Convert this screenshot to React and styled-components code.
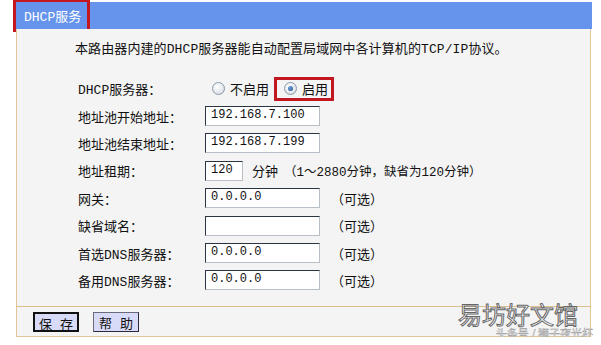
import React from "react";
import styled, { createGlobalStyle } from "styled-components";

const GlobalStyle = createGlobalStyle`
  html, body {
    margin: 0;
    padding: 0;
    background: #ffffff;
  }
  body {
    font-family: "Liberation Mono", "Noto Sans CJK SC", monospace;
    font-size: 13px;
    color: #111;
  }
`;

const rows = [
  { label: "地址池开始地址：", value: "192.168.7.100" },
  { label: "地址池结束地址：", value: "192.168.7.199" },
];

const optional = [
  { label: "网关：", value: "0.0.0.0" },
  { label: "缺省域名：", value: "" },
  { label: "首选DNS服务器：", value: "0.0.0.0" },
  { label: "备用DNS服务器：", value: "0.0.0.0" },
];

function App() {
  return (
    <>
      <GlobalStyle />
      <Page>
        <Panel>
          <Header>
            <HeaderTitle>DHCP服务</HeaderTitle>
          </Header>
          <Body>
            <Intro>本路由器内建的DHCP服务器能自动配置局域网中各计算机的TCP/IP协议。</Intro>
            <Form>
              <Row>
                <Label>DHCP服务器：</Label>
                <Field>
                  <RadioOption>
                    <Radio />
                    <span>不启用</span>
                  </RadioOption>
                  <RadioOption $marked>
                    <Radio $checked />
                    <span>启用</span>
                  </RadioOption>
                </Field>
              </Row>
              {rows.map((r) => (
                <Row key={r.label}>
                  <Label>{r.label}</Label>
                  <Field>
                    <TextBox>{r.value}</TextBox>
                  </Field>
                </Row>
              ))}
              <Row>
                <Label>地址租期：</Label>
                <Field>
                  <TextBox $short>120</TextBox>
                  <Unit>分钟</Unit>
                  <Hint>（1～2880分钟，缺省为120分钟）</Hint>
                </Field>
              </Row>
              {optional.map((r) => (
                <Row key={r.label}>
                  <Label>{r.label}</Label>
                  <Field>
                    <TextBox>{r.value}</TextBox>
                    <Optional>（可选）</Optional>
                  </Field>
                </Row>
              ))}
            </Form>
          </Body>
          <Footer>
            <Button $default>保 存</Button>
            <Button>帮 助</Button>
          </Footer>
          <Watermark>
            <Brand>易坊好文馆</Brand>
            <Source>头条号 / 狮子夜光杯</Source>
          </Watermark>
        </Panel>
      </Page>
    </>
  );
}

export default App;

const Page = styled.div`
  padding: 2px 9px 0 16px;
  width: 576px;
`;

const Panel = styled.div`
  position: relative;
  display: flex;
  flex-direction: column;
`;

const Header = styled.div`
  height: 27px;
  background: #6694ec;
  display: flex;
  align-items: stretch;
`;

const HeaderTitle = styled.span`
  display: flex;
  align-items: center;
  padding: 0 6px 0 8px;
  color: #ffffff;
  font-size: 13px;
  outline: 3px solid #c3171f;
  outline-offset: 0;
`;

const Body = styled.div`
  background: #f4f4f4;
  border-left: 1px solid #e2c594;
  border-right: 1px solid #e2c594;
  margin-right: 1px;
  padding: 11px 0 12px 58px;
`;

const Intro = styled.div`
  height: 20px;
  line-height: 20px;
  letter-spacing: 0.1px;
  margin-bottom: 15px;
`;

const Form = styled.div`
  display: flex;
  flex-direction: column;
  padding-left: 3px;
`;

const Row = styled.div`
  display: flex;
  align-items: center;
  height: 27.4px;
`;

const Label = styled.div`
  width: 127px;
  flex-shrink: 0;
`;

const Field = styled.div`
  display: flex;
  align-items: center;
`;

const RadioOption = styled.label`
  display: flex;
  align-items: center;
  gap: 5px;
  height: 24px;
  margin-left: ${(p) => (p.$marked ? "2px" : "0")};
  outline: ${(p) => (p.$marked ? "3px solid #c3171f" : "none")};
  outline-offset: -3px;
  padding-right: ${(p) => (p.$marked ? "6px" : "3px")};
  padding-left: ${(p) => (p.$marked ? "10px" : "7px")};
`;

const Radio = styled.span`
  width: 11px;
  height: 11px;
  border-radius: 50%;
  border: 1px solid #8a98a8;
  background: radial-gradient(circle at 40% 35%, #ffffff 0%, #dfe3e8 70%, #c8ced6 100%);
  position: relative;
  &::after {
    content: "";
    display: ${(p) => (p.$checked ? "block" : "none")};
    position: absolute;
    left: 3px;
    top: 3px;
    width: 5px;
    height: 5px;
    border-radius: 50%;
    background: radial-gradient(circle at 40% 35%, #6fa0d8 0%, #1f4f8f 100%);
  }
`;

const TextBox = styled.div`
  box-sizing: border-box;
  width: ${(p) => (p.$short ? "38px" : "115px")};
  height: 20px;
  background: #ffffff;
  border: 1px solid #2a3442;
  border-right-color: #b8bec6;
  border-bottom-color: #b8bec6;
  font-size: 12px;
  line-height: 17px;
  padding-left: 5px;
  white-space: nowrap;
`;

const Unit = styled.span`
  margin-left: 9px;
`;

const Hint = styled.span`
  margin-left: 6px;
  font-size: 12.5px;
`;

const Optional = styled.span`
  margin-left: 11px;
`;

const Footer = styled.div`
  display: flex;
  gap: 14px;
  align-items: center;
  height: 29px;
  padding-left: 16px;
  background: #f4f4f4;
  border: 1px solid #e2c594;
  border-top-color: #ddbf8c;
  margin-right: 1px;
`;

const Button = styled.button`
  box-sizing: border-box;
  width: 46px;
  height: 20px;
  padding: 0;
  font-family: "Liberation Mono", "Noto Sans CJK SC", monospace;
  font-size: 13px;
  color: #111;
  background: #d8dbf8;
  border: ${(p) => (p.$default ? "2px solid #111" : "1px solid #6a6a7a")};
  border-right-color: ${(p) => (p.$default ? "#111" : "#2a2a3a")};
  border-bottom-color: ${(p) => (p.$default ? "#111" : "#2a2a3a")};
`;

const Watermark = styled.div`
  position: absolute;
  right: -1px;
  bottom: -3px;
  display: flex;
  flex-direction: column;
  align-items: flex-end;
  pointer-events: none;
`;

const Brand = styled.div`
  font-family: "Noto Sans CJK SC", sans-serif;
  font-size: 24px;
  line-height: 24px;
  color: #ffffff;
  -webkit-text-stroke: 1px #666;
  margin-right: 15px;
`;

const Source = styled.div`
  font-family: "Noto Sans CJK SC", sans-serif;
  font-size: 11px;
  line-height: 14px;
  color: #ececec;
  -webkit-text-stroke: 0.4px #9a9a9a;
`;
